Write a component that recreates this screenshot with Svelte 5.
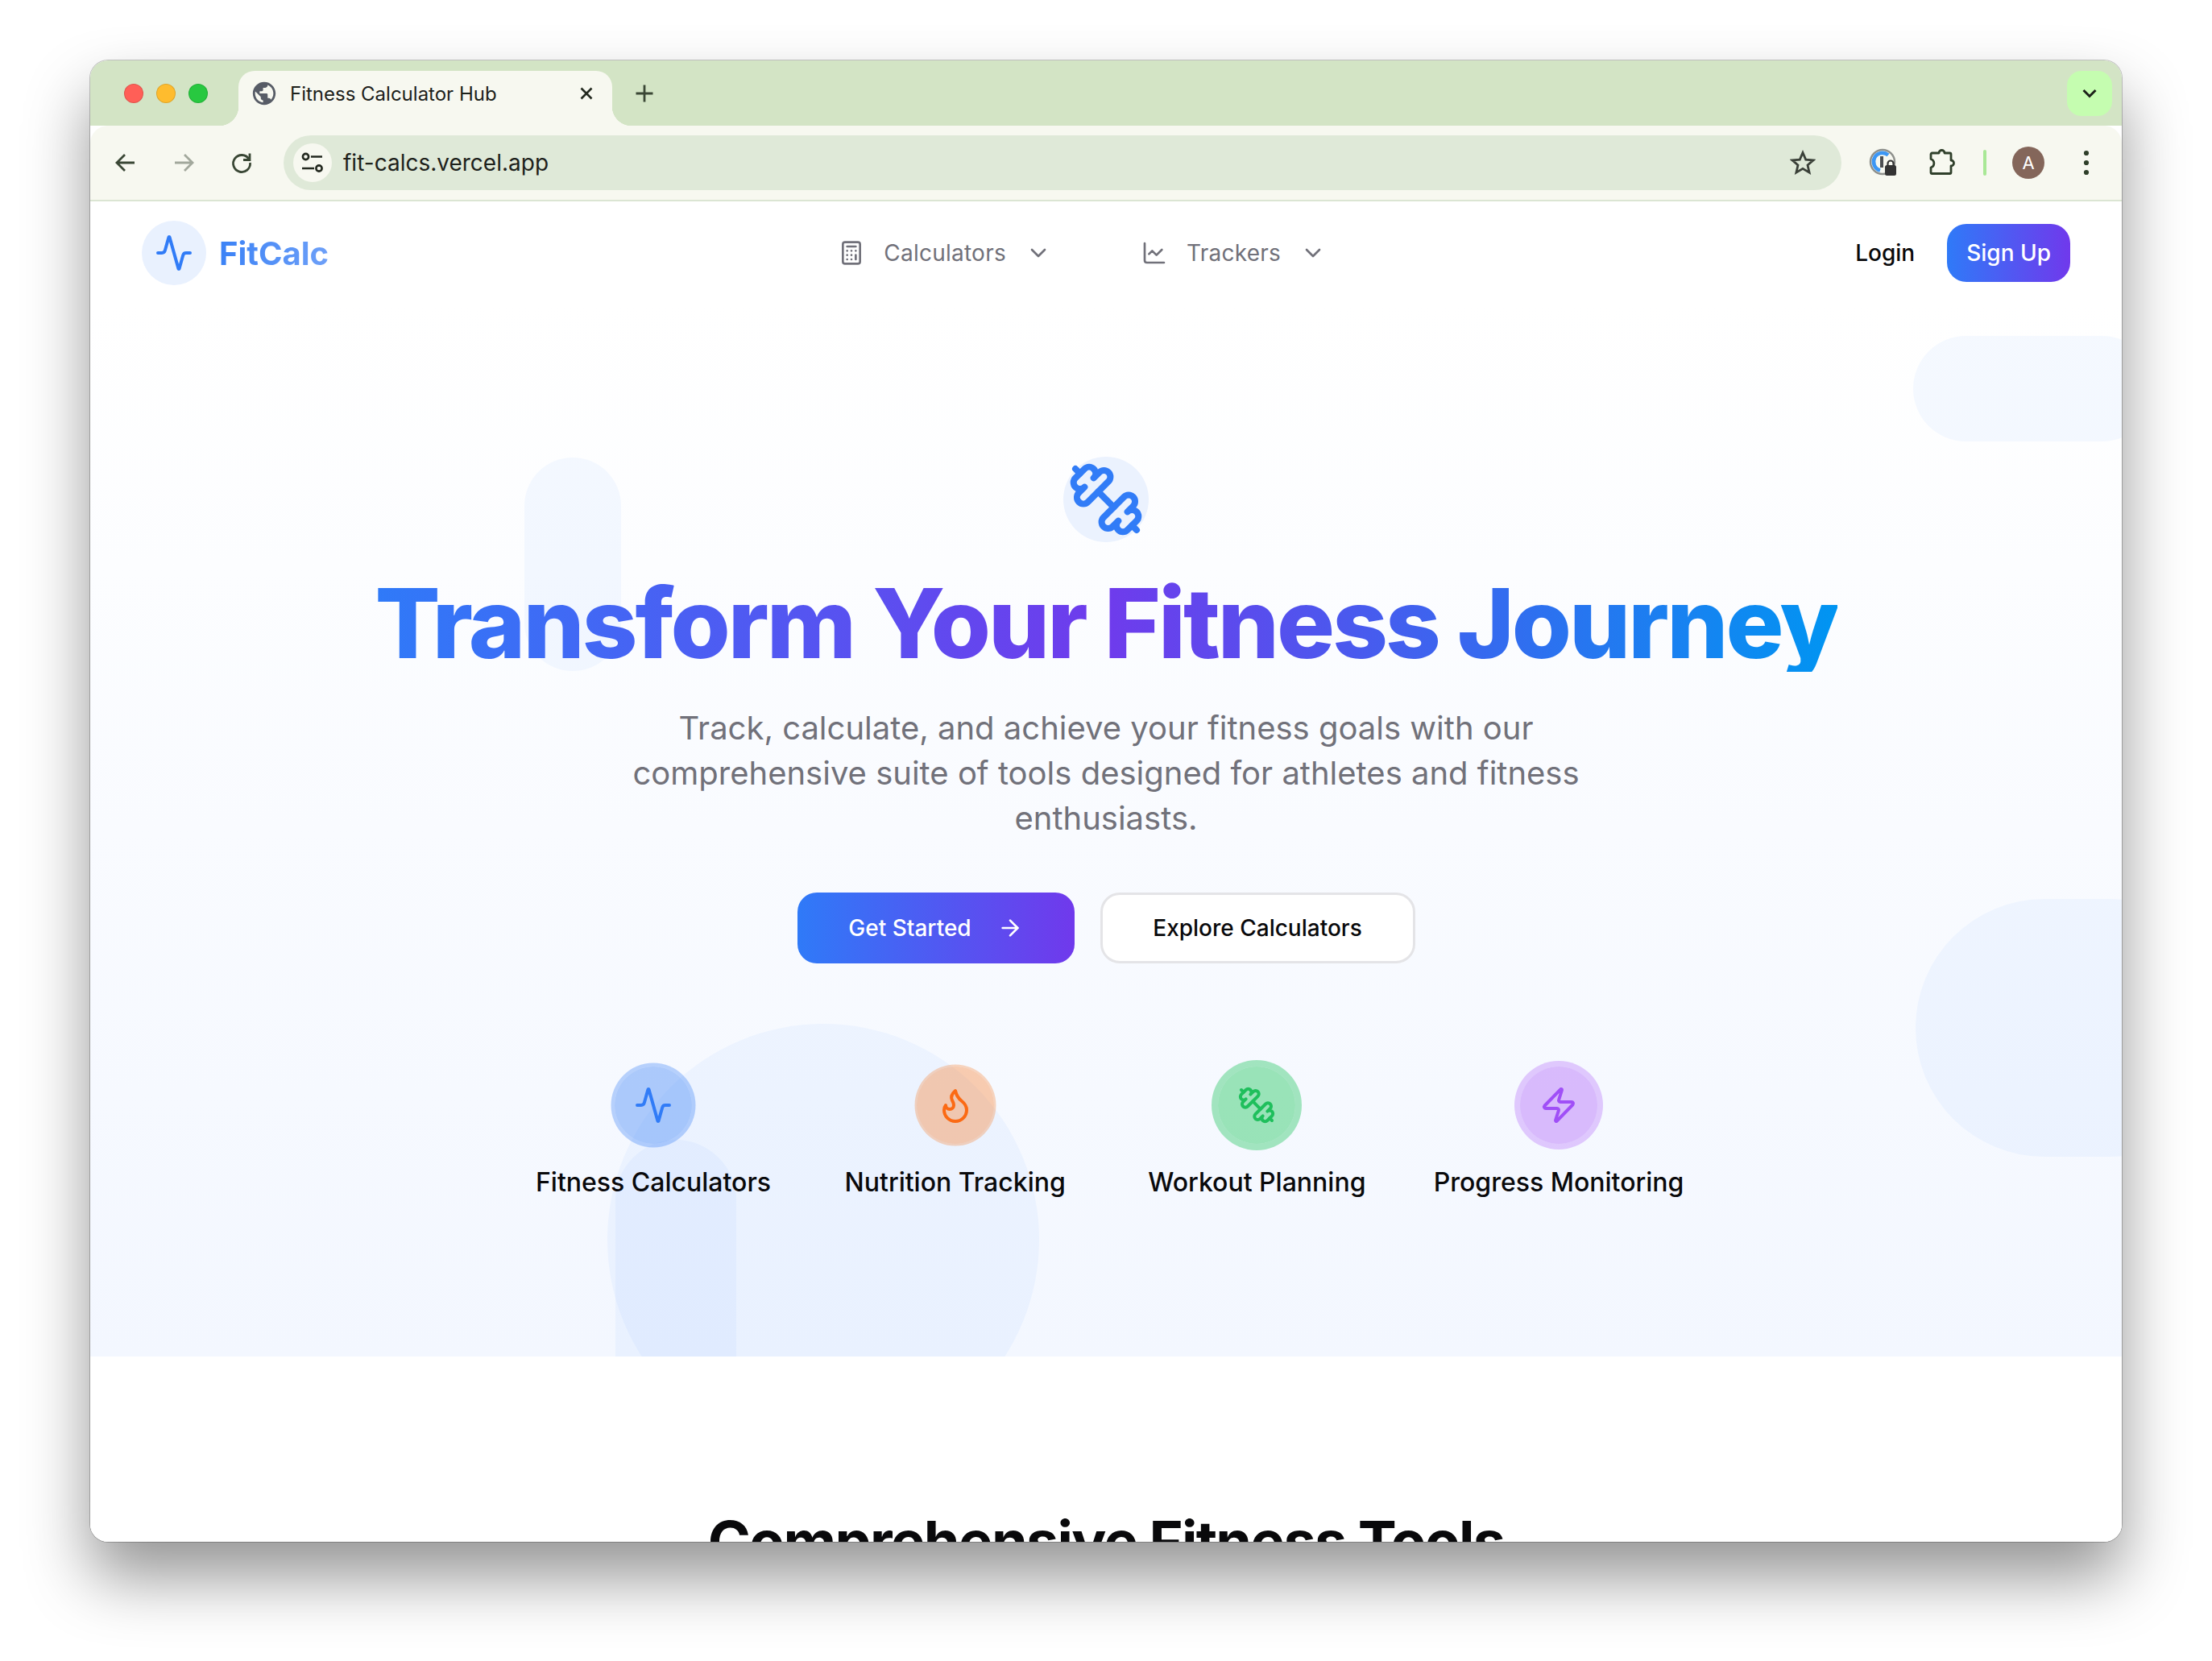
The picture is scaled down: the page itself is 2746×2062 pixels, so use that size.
<script lang="ts">
  const features = [
    { label: "Fitness Calculators", tone: "blue", icon: "activity" },
    { label: "Nutrition Tracking", tone: "orange", icon: "flame" },
    { label: "Workout Planning", tone: "green", icon: "dumbbell" },
    { label: "Progress Monitoring", tone: "purple", icon: "zap" },
  ];
</script>

{#snippet dumbbell(size: number)}
  <svg width={size} height={size} viewBox="0 0 24 24" fill="none" stroke="currentColor" stroke-width="2" stroke-linecap="round" stroke-linejoin="round">
    <path d="M14.4 14.4 9.6 9.6" />
    <path d="M18.657 21.485a2 2 0 1 1-2.829-2.828l-1.767 1.768a2 2 0 1 1-2.829-2.829l6.364-6.364a2 2 0 1 1 2.829 2.829l-1.768 1.767a2 2 0 1 1 2.828 2.829z" />
    <path d="m21.5 21.5-1.4-1.4" />
    <path d="M3.9 3.9 2.5 2.5" />
    <path d="M6.404 12.768a2 2 0 1 1-2.829-2.829l1.768-1.767a2 2 0 1 1-2.828-2.829l2.828-2.828a2 2 0 1 1 2.829 2.828l1.767-1.768a2 2 0 1 1 2.829 2.829z" />
  </svg>
{/snippet}

{#snippet activity(size: number)}
  <svg width={size} height={size} viewBox="0 0 24 24" fill="none" stroke="currentColor" stroke-width="2" stroke-linecap="round" stroke-linejoin="round">
    <path d="M22 12h-2.48a2 2 0 0 0-1.93 1.46l-2.35 8.36a.25.25 0 0 1-.48 0L9.24 2.18a.25.25 0 0 0-.48 0l-2.35 8.36A2 2 0 0 1 4.49 12H2" />
  </svg>
{/snippet}

{#snippet chevron()}
  <svg width="32" height="32" viewBox="0 0 24 24" fill="none" stroke="currentColor" stroke-width="2" stroke-linecap="round" stroke-linejoin="round">
    <path d="m6 9 6 6 6-6" />
  </svg>
{/snippet}

<div class="desktop">
  <div class="window">
    <div class="tabstrip">
      <div class="lights">
        <span class="light red"></span>
        <span class="light amber"></span>
        <span class="light green"></span>
      </div>
      <div class="tab">
        <svg class="globe" width="34" height="34" viewBox="0 0 24 24" fill="#575c66">
          <path d="M12 2C6.48 2 2 6.48 2 12s4.48 10 10 10 10-4.48 10-10S17.52 2 12 2zm-1 17.93c-3.95-.49-7-3.85-7-7.93 0-.62.08-1.21.21-1.79L9 15v1c0 1.1.9 2 2 2v1.93zm6.9-2.54c-.26-.81-1-1.39-1.9-1.39h-1v-3c0-.55-.45-1-1-1H8v-2h2c.55 0 1-.45 1-1V7h2c1.1 0 2-.9 2-2v-.41c2.93 1.19 5 4.06 5 7.41 0 2.08-.8 3.97-2.1 5.39z" />
        </svg>
        <span class="tab-title">Fitness Calculator Hub</span>
        <svg class="tab-close" width="20" height="20" viewBox="0 0 20 20" fill="none" stroke="#23291f" stroke-width="2.6">
          <path d="M3.5 3.5l13 13M16.5 3.5l-13 13" />
        </svg>
      </div>
      <svg class="new-tab" width="24" height="24" viewBox="0 0 24 24" fill="none" stroke="#3a4735" stroke-width="2.8">
        <path d="M12 1.5v21M1.5 12h21" />
      </svg>
      <div class="tab-menu">
        <svg width="20" height="14" viewBox="0 0 20 14" fill="none" stroke="#1c2119" stroke-width="3">
          <path d="M2.5 3l7.5 7.5L17.5 3" />
        </svg>
      </div>
    </div>

    <div class="toolbar">
      <svg class="tool" width="32" height="32" viewBox="0 0 32 32" fill="none" stroke="#3a4735" stroke-width="2.8">
        <path d="M27 16H6M15 6L5 16l10 10" />
      </svg>
      <svg class="tool" width="32" height="32" viewBox="0 0 32 32" fill="none" stroke="#a2a89c" stroke-width="2.8">
        <path d="M5 16h21M17 6l10 10-10 10" />
      </svg>
      <svg class="tool" width="32" height="32" viewBox="0 0 32 32" fill="none" stroke="#3a4735" stroke-width="2.8">
        <path d="M25 11.5A10.5 10.5 0 1 0 26.5 16" />
        <path d="M26 4.5v8h-8" />
      </svg>
      <div class="omnibox">
        <span class="site-chip">
          <svg width="32" height="32" viewBox="0 0 32 32" fill="none" stroke="#23291f" stroke-width="2.6">
            <circle cx="7.5" cy="8.5" r="3.6" />
            <path d="M14 8.5h14M3 23h15" />
            <circle cx="24" cy="23" r="3.6" />
          </svg>
        </span>
        <span class="url">fit-calcs.vercel.app</span>
        <svg class="star" width="32" height="32" viewBox="0 0 32 32" fill="none" stroke="#3a4038" stroke-width="2.8" stroke-linejoin="miter">
          <path d="M16 3.5l3.7 8.6 9.3.8-7 6.1 2.1 9.1-8.1-4.8-8.1 4.8 2.1-9.1-7-6.1 9.3-.8z" />
        </svg>
      </div>
      <svg class="ext-pass" width="36" height="36" viewBox="0 0 36 36" fill="none">
        <circle cx="17" cy="17" r="15" stroke="#8e908c" stroke-width="2.4" />
        <path d="M24 8.5A11 11 0 1 0 14 27.5" stroke="#3c97f5" stroke-width="4.6" />
        <path d="M16 10v14" stroke="#4c4f52" stroke-width="4" />
        <rect x="20" y="21" width="14" height="13" rx="2.5" fill="#333" />
        <path d="M23.5 21.5v-2.5a3.5 3.5 0 0 1 7 0v2.5" stroke="#333" stroke-width="2.2" />
      </svg>
      <svg class="ext-puzzle" width="36" height="36" viewBox="0 0 36 36" fill="none" stroke="#2f3f2a" stroke-width="2.8" stroke-linejoin="round">
        <path d="M4 7.5a1.5 1.5 0 0 1 1.5-1.5H14a3.5 3.5 0 0 1 7 0h6.5a1.5 1.5 0 0 1 1.5 1.5V15a3.5 3.5 0 0 1 0 7v8a1.5 1.5 0 0 1-1.5 1.5h-22A1.5 1.5 0 0 1 4 30v-6a5.5 5.5 0 0 0 0-10.5z" />
      </svg>
      <span class="divider"></span>
      <span class="avatar">A</span>
      <svg class="dots" width="12" height="36" viewBox="0 0 12 36" fill="#2f3f2a">
        <circle cx="6" cy="6" r="3.1" />
        <circle cx="6" cy="18" r="3.1" />
        <circle cx="6" cy="30" r="3.1" />
      </svg>
    </div>

    <div class="page">
      <nav class="nav">
        <div class="brand">
          <span class="brand-mark">{@render activity(48)}</span>
          <span class="brand-name">FitCalc</span>
        </div>
        <div class="menu">
          <span class="menu-item">
            <svg width="32" height="32" viewBox="0 0 24 24" fill="none" stroke="currentColor" stroke-width="2" stroke-linecap="round" stroke-linejoin="round">
              <rect width="16" height="20" x="4" y="2" rx="2" />
              <line x1="8" x2="16" y1="6" y2="6" />
              <line x1="16" x2="16" y1="14" y2="18" />
              <path d="M16 10h.01M12 10h.01M8 10h.01M12 14h.01M8 14h.01M12 18h.01M8 18h.01" />
            </svg>
            <span>Calculators</span>
            {@render chevron()}
          </span>
          <span class="menu-item">
            <svg width="32" height="32" viewBox="0 0 24 24" fill="none" stroke="currentColor" stroke-width="2" stroke-linecap="round" stroke-linejoin="round">
              <path d="M3 3v16a2 2 0 0 0 2 2h16" />
              <path d="m19 9-5 5-4-4-3 3" />
            </svg>
            <span>Trackers</span>
            {@render chevron()}
          </span>
        </div>
        <div class="auth">
          <span class="login">Login</span>
          <span class="signup">Sign Up</span>
        </div>
      </nav>

      <section class="hero">
        <span class="blob blob-top"></span>
        <span class="blob blob-pill"></span>
        <span class="blob blob-right"></span>
        <span class="blob blob-circle"></span>
        <span class="blob blob-low"></span>

        <div class="hero-badge">{@render dumbbell(96)}</div>
        <h1>Transform Your Fitness Journey</h1>
        <p class="lead">Track, calculate, and achieve your fitness goals with our comprehensive suite of tools designed for athletes and fitness enthusiasts.</p>
        <div class="cta">
          <span class="btn primary">
            Get Started
            <svg width="32" height="32" viewBox="0 0 24 24" fill="none" stroke="currentColor" stroke-width="2" stroke-linecap="round" stroke-linejoin="round">
              <path d="M5 12h14" />
              <path d="m12 5 7 7-7 7" />
            </svg>
          </span>
          <span class="btn outline">Explore Calculators</span>
        </div>
        <div class="features">
          {#each features as feature (feature.label)}
            <div class="feature">
              <span class="feature-icon {feature.tone}">
                {#if feature.icon === "activity"}
                  {@render activity(48)}
                {:else if feature.icon === "flame"}
                  <svg width="48" height="48" viewBox="0 0 24 24" fill="none" stroke="currentColor" stroke-width="2" stroke-linecap="round" stroke-linejoin="round">
                    <path d="M8.5 14.5A2.5 2.5 0 0 0 11 12c0-1.38-.5-2-1-3-1.072-2.143-.224-4.054 2-6 .5 2.5 2 4.9 4 6.5 2 1.6 3 3.5 3 5.5a7 7 0 1 1-14 0c0-1.153.433-2.294 1-3a2.5 2.5 0 0 0 2.5 2.5z" />
                  </svg>
                {:else if feature.icon === "dumbbell"}
                  {@render dumbbell(48)}
                {:else}
                  <svg width="48" height="48" viewBox="0 0 24 24" fill="none" stroke="currentColor" stroke-width="2" stroke-linecap="round" stroke-linejoin="round">
                    <path d="M4 14a1 1 0 0 1-.78-1.63l9.9-10.2a.5.5 0 0 1 .86.46l-1.92 6.02A1 1 0 0 0 13 10h7a1 1 0 0 1 .78 1.63l-9.9 10.2a.5.5 0 0 1-.86-.46l1.92-6.02A1 1 0 0 0 11 14z" />
                  </svg>
                {/if}
              </span>
              <span class="feature-label">{feature.label}</span>
            </div>
          {/each}
        </div>
      </section>

      <section class="tools">
        <h2>Comprehensive Fitness Tools</h2>
      </section>
    </div>
  </div>
</div>

<style>
  :global(body) {
    margin: 0;
    background: #fff;
    font-family: Inter, "Noto Sans", sans-serif;
  }

  .desktop {
    box-sizing: border-box;
    height: 2062px;
    padding: 75px 112px 0;
    overflow: hidden;
  }

  .window {
    box-sizing: border-box;
    width: 2522px;
    height: 1839px;
    border-radius: 22px;
    overflow: hidden;
    display: flex;
    flex-direction: column;
    background: #fff;
    box-shadow:
      0 0 0 1px rgba(0, 0, 0, 0.22),
      0 44px 80px rgba(0, 0, 0, 0.42);
  }

  .tabstrip {
    flex: none;
    height: 81px;
    display: flex;
    align-items: flex-start;
    background: #d3e4c5;
  }

  .lights {
    flex: none;
    display: flex;
    gap: 16px;
    padding: 29px 0 0 42px;
    width: 142px;
    box-sizing: border-box;
  }

  .light {
    flex: none;
    width: 24px;
    height: 24px;
    border-radius: 50%;
    box-sizing: border-box;
    border: 1px solid rgba(0, 0, 0, 0.12);
  }

  .red { background: #ff5f57; }
  .amber { background: #febc2e; }
  .green { background: #28c840; }

  .tab {
    position: relative;
    box-sizing: border-box;
    width: 464px;
    height: 68px;
    margin-top: 13px;
    margin-left: 42px;
    padding: 0 22px 12px 15px;
    display: flex;
    align-items: center;
    border-radius: 20px 20px 0 0;
    background: #f7f8f0;
  }

  .tab::before,
  .tab::after {
    content: "";
    position: absolute;
    bottom: 0;
    width: 24px;
    height: 24px;
  }

  .tab::before {
    left: -24px;
    background: radial-gradient(circle at 0 0, transparent 24px, #f7f8f0 24.5px);
  }

  .tab::after {
    right: -24px;
    background: radial-gradient(circle at 100% 0, transparent 24px, #f7f8f0 24.5px);
  }

  .tab-title {
    margin-left: 15px;
    font-size: 24px;
    color: #1d211b;
    white-space: nowrap;
  }

  .tab-close {
    margin-left: auto;
  }

  .new-tab {
    margin: 29px 0 0 28px;
  }

  .tab-menu {
    margin: 13px 12px 0 auto;
    width: 56px;
    height: 56px;
    border-radius: 18px;
    background: #c5fdb0;
    display: flex;
    align-items: center;
    justify-content: center;
  }

  .toolbar {
    flex: none;
    box-sizing: border-box;
    height: 94px;
    padding: 13px 0 13px 28px;
    display: flex;
    align-items: center;
    background: #f7f8f0;
    border-bottom: 2px solid #dbe5d3;
    border-radius: 22px 22px 0 0;
    position: relative;
  }

  .tool {
    flex: none;
    margin-right: 40px;
  }

  .omnibox {
    flex: none;
    box-sizing: border-box;
    width: 1934px;
    height: 68px;
    margin-left: -4px;
    padding: 0 12px;
    display: flex;
    align-items: center;
    border-radius: 34px;
    background: #dfe9d8;
  }

  .site-chip {
    width: 48px;
    height: 48px;
    border-radius: 50%;
    background: #f7f8f0;
    display: flex;
    align-items: center;
    justify-content: center;
  }

  .url {
    margin-left: 14px;
    font-size: 28px;
    color: #1d211b;
  }

  .star {
    margin-left: auto;
    margin-right: 20px;
  }

  .ext-pass {
    flex: none;
    margin-left: 34px;
  }

  .ext-puzzle {
    flex: none;
    margin-left: 37px;
  }

  .divider {
    flex: none;
    width: 4px;
    height: 32px;
    margin-left: 33px;
    border-radius: 2px;
    background: #a9e896;
  }

  .avatar {
    flex: none;
    width: 40px;
    height: 40px;
    margin-left: 32px;
    border-radius: 50%;
    background: #84665a;
    color: #fff;
    font-size: 22px;
    display: flex;
    align-items: center;
    justify-content: center;
  }

  .dots {
    flex: none;
    margin-left: 46px;
  }

  .page {
    flex: 1;
    min-height: 0;
    overflow: hidden;
    background: #fff;
  }

  .nav {
    height: 128px;
    padding: 0 64px;
    display: flex;
    justify-content: space-between;
    align-items: center;
    background: #fff;
  }

  .brand {
    display: flex;
    align-items: center;
    gap: 16px;
  }

  .brand-mark {
    width: 80px;
    height: 80px;
    border-radius: 50%;
    background: #e9f1fe;
    color: #317cf7;
    display: flex;
    align-items: center;
    justify-content: center;
  }

  .brand-name {
    font-size: 40px;
    font-weight: 700;
    background: linear-gradient(90deg, #3b82f6, #6ea0f8);
    background-clip: text;
    -webkit-background-clip: text;
    color: transparent;
  }

  .menu {
    display: flex;
    gap: 112px;
    margin-right: 24px;
    color: #71717a;
    font-size: 28px;
    font-weight: 400;
    letter-spacing: 0.25px;
  }

  .menu-item {
    display: flex;
    align-items: center;
    gap: 24px;
  }

  .auth {
    display: flex;
    align-items: center;
    gap: 40px;
    font-size: 28px;
    font-weight: 500;
  }

  .login {
    color: #09090b;
  }

  .signup {
    height: 72px;
    padding: 0 24px;
    display: flex;
    align-items: center;
    border-radius: 24px;
    color: #fff;
    background: linear-gradient(90deg, #2f7af8, #7039ec);
  }

  .hero {
    position: relative;
    overflow: hidden;
    height: 1306px;
    box-sizing: border-box;
    padding-top: 189px;
    display: flex;
    flex-direction: column;
    align-items: center;
    background: linear-gradient(180deg, #fff, #f3f7ff);
  }

  .blob {
    position: absolute;
    background: rgba(59, 130, 246, 0.05);
  }

  .blob-top {
    left: 2263px;
    top: 39px;
    width: 300px;
    height: 131px;
    border-radius: 66px;
  }

  .blob-pill {
    left: 539px;
    top: 190px;
    width: 120px;
    height: 265px;
    border-radius: 60px;
  }

  .blob-right {
    left: 2266px;
    top: 738px;
    width: 400px;
    height: 320px;
    border-radius: 160px;
  }

  .blob-circle {
    left: 642px;
    top: 893px;
    width: 536px;
    height: 536px;
    border-radius: 50%;
  }

  .blob-low {
    left: 652px;
    top: 1037px;
    width: 150px;
    height: 400px;
    border-radius: 75px;
  }

  .hero-badge {
    position: relative;
    flex: none;
    width: 106px;
    height: 106px;
    border-radius: 50%;
    background: #ebf2fe;
    color: #317cf7;
    display: flex;
    align-items: center;
    justify-content: center;
  }

  h1 {
    position: relative;
    margin: 41px 0 0;
    font-size: 120px;
    line-height: 120px;
    font-weight: 800;
    letter-spacing: -3px;
    white-space: nowrap;
    background: linear-gradient(90deg, #2f7af8, #6f3bec 50%, #0095f2);
    background-clip: text;
    -webkit-background-clip: text;
    color: transparent;
  }

  .lead {
    position: relative;
    width: 1344px;
    margin: 42px 0 0;
    font-size: 40px;
    line-height: 56px;
    text-align: center;
    color: #71717a;
  }

  .cta {
    position: relative;
    display: flex;
    gap: 32px;
    margin-top: 64px;
  }

  .btn {
    box-sizing: border-box;
    height: 88px;
    border-radius: 24px;
    display: flex;
    align-items: center;
    justify-content: center;
    font-size: 28px;
    font-weight: 500;
  }

  .primary {
    width: 344px;
    gap: 32px;
    color: #fff;
    background: linear-gradient(90deg, #2f7af8, #7039ec);
  }

  .outline {
    width: 391px;
    color: #09090b;
    background: #fff;
    border: 3px solid #e4e4e7;
  }

  .features {
    position: relative;
    display: grid;
    grid-template-columns: repeat(4, 342.7px);
    column-gap: 32px;
    margin-top: 128px;
  }

  .feature {
    display: flex;
    flex-direction: column;
    align-items: center;
    gap: 24px;
  }

  .feature-icon {
    width: 96px;
    height: 96px;
    border-radius: 50%;
    display: flex;
    align-items: center;
    justify-content: center;
  }

  .feature-icon.blue {
    color: #317cf7;
    background: rgba(59, 130, 246, 0.4);
    box-shadow: 0 0 0 4.5px rgba(59, 130, 246, 0.34);
  }

  .feature-icon.orange {
    color: #fb6a14;
    background: rgba(249, 115, 22, 0.34);
    box-shadow: 0 0 0 2.5px rgba(249, 115, 22, 0.28);
  }

  .feature-icon.green {
    color: #1fbf5c;
    background: rgba(34, 197, 94, 0.44);
    box-shadow: 0 0 0 8px rgba(34, 197, 94, 0.4);
  }

  .feature-icon.purple {
    color: #a04ff7;
    background: rgba(168, 85, 247, 0.38);
    box-shadow: 0 0 0 7px rgba(168, 85, 247, 0.3);
  }

  .feature-label {
    font-size: 32px;
    line-height: 48px;
    font-weight: 500;
    color: #09090b;
    white-space: nowrap;
  }

  .tools {
    background: #fff;
    padding-top: 190px;
    text-align: center;
  }

  h2 {
    margin: 0;
    font-size: 72px;
    line-height: 80px;
    font-weight: 700;
    letter-spacing: -1.8px;
    color: #09090b;
  }
</style>
